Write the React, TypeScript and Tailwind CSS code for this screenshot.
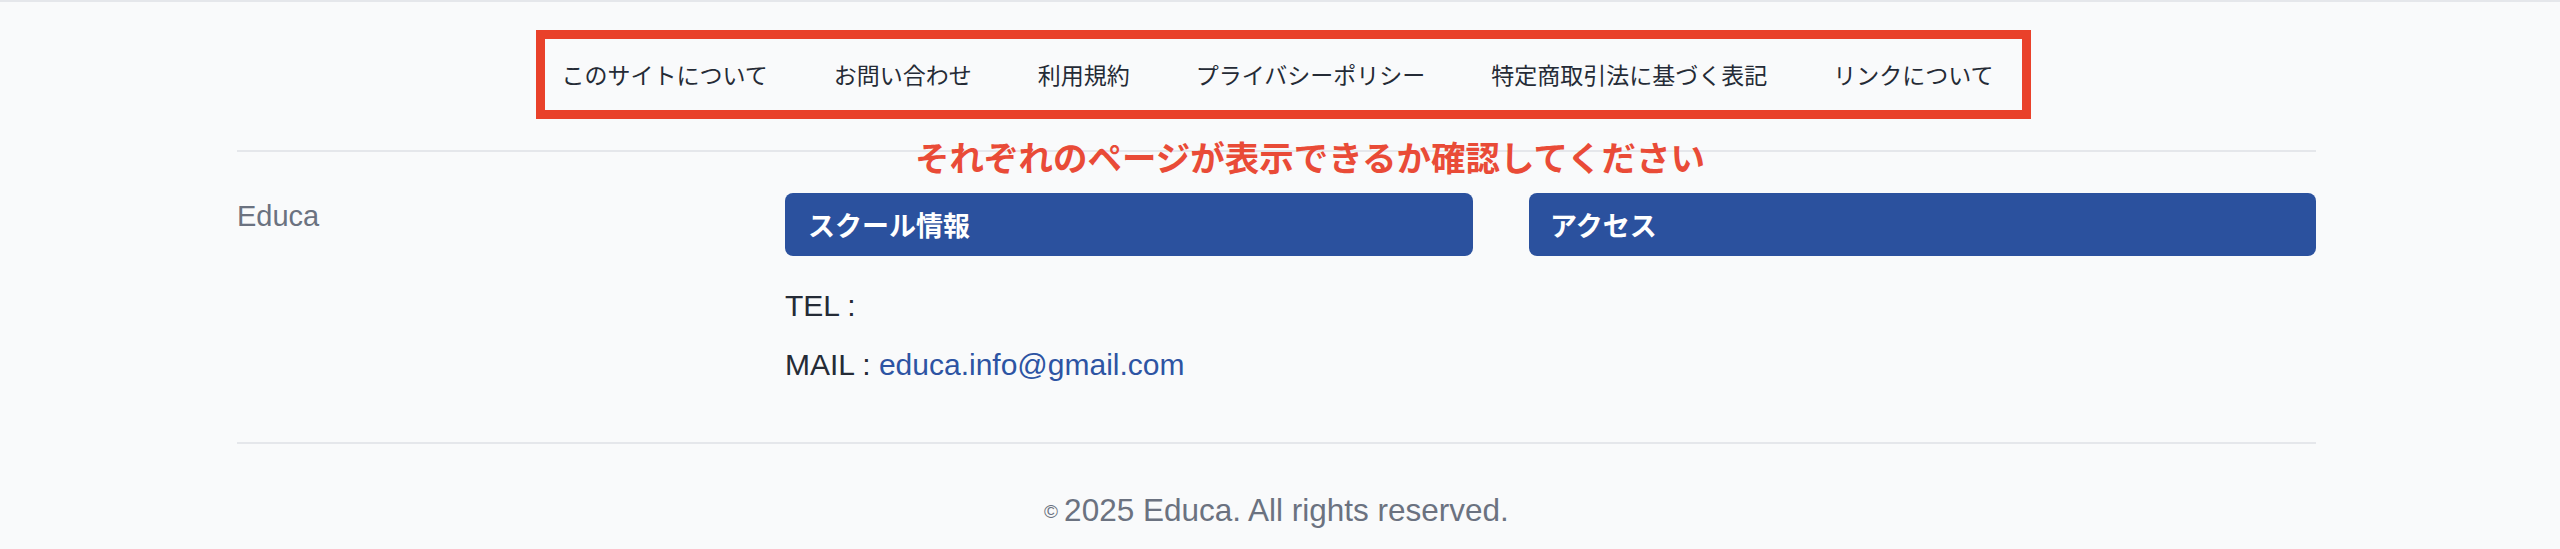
import React from "react";

const navItems = [
  "このサイトについて",
  "お問い合わせ",
  "利用規約",
  "プライバシーポリシー",
  "特定商取引法に基づく表記",
  "リンクについて",
];

export default function App() {
  return (
    <footer className="relative min-h-[549px] w-full border-t-2 border-[#e5e7eb] bg-[#f9fafb] pr-[7px] font-['Liberation_Sans','Noto_Sans_CJK_JP',sans-serif]">
      <div className="flex justify-center pt-[28px]">
        <nav className="ml-[14px] flex h-[89px] items-center gap-[66px] border-[9px] border-[#e9412a] pl-[16px] pr-[28px] font-['Noto_Sans_CJK_JP',sans-serif] text-[23px] text-[#252b36]">
          {navItems.map((item) => (
            <a key={item} href="#" className="whitespace-nowrap leading-none">
              {item}
            </a>
          ))}
        </nav>
      </div>

      <div className="mx-auto w-[2079px]">
        <div className="mt-[31px] border-t-2 border-[#e5e7eb]" />

        <div className="mt-[41px] grid grid-cols-[492px_688px_787px] gap-x-[56px]">
          <div className="mt-[3px] text-[29px] leading-[40px] text-[#6b7280]">Educa</div>

          <div>
            <h3 className="h-[63px] rounded-[8px] bg-[#2b519e] px-[23px] font-['Noto_Sans_CJK_JP',sans-serif] text-[27px] font-bold leading-[63px] text-white">
              スクール情報
            </h3>
            <div className="mt-[28px] flex flex-col gap-[15px] text-[30px] leading-[44px] text-[#252b36]">
              <p>TEL :</p>
              <p>
                MAIL : <a href="#" className="text-[#2d54a3]">educa.info@gmail.com</a>
              </p>
            </div>
          </div>

          <div>
            <h3 className="h-[63px] rounded-[8px] bg-[#2b519e] px-[21px] font-['Noto_Sans_CJK_JP',sans-serif] text-[27px] font-bold leading-[63px] text-white">
              アクセス
            </h3>
          </div>
        </div>

        <div className="mt-[55px] border-t-2 border-[#e5e7eb]" />

        <p className="pt-[44px] text-center text-[31.5px] leading-[44px] text-[#6b7280]">
          <span className="mr-[6px] align-[3px] text-[19px]">©</span>2025 Educa. All rights reserved.
        </p>
      </div>

      <p className="absolute left-[915px] top-[137px] whitespace-nowrap font-['Noto_Sans_CJK_JP',sans-serif] text-[34.5px] font-bold leading-none text-[#e94b37]">
        それぞれのページが表示できるか確認してください
      </p>
    </footer>
  );
}
